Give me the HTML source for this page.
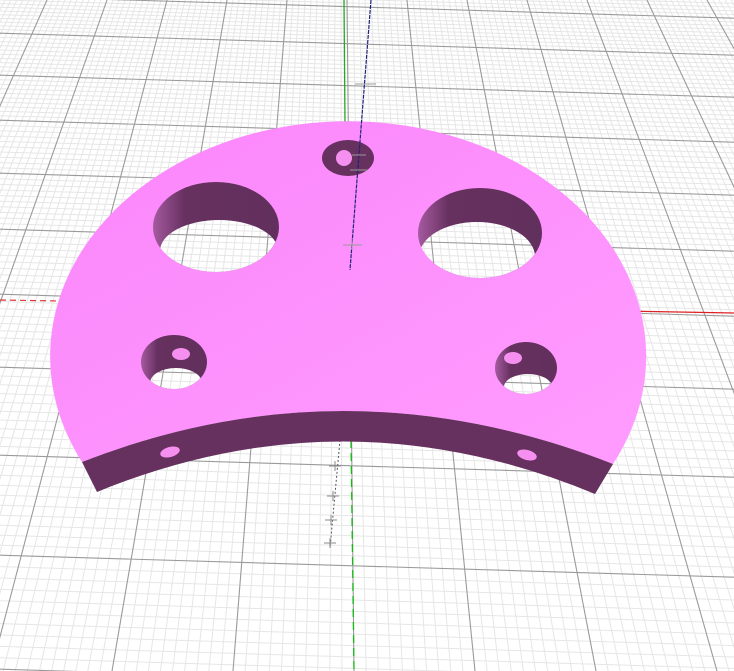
<!DOCTYPE html>
<html><head><meta charset="utf-8"><style>
html,body{margin:0;padding:0;background:#fff;overflow:hidden;width:734px;height:671px}
svg{display:block;position:absolute;left:0;top:0}
</style></head><body>
<svg id="s" width="734" height="671" viewBox="0 0 734 671" xmlns="http://www.w3.org/2000/svg">
<rect width="734" height="671" fill="#ffffff"/>
<g id="grid"></g>
<line x1="0" y1="300" x2="60" y2="301" stroke="#d33" stroke-width="1.2" stroke-dasharray="6,4"/>
<line x1="620" y1="311" x2="734" y2="313" stroke="#d22" stroke-width="1.3"/>
<line x1="344" y1="0" x2="345" y2="125" stroke="#2a2" stroke-width="1.3"/>
<line x1="351" y1="440" x2="354" y2="671" stroke="#1b1" stroke-width="1.3" stroke-dasharray="8,5"/>
<line x1="340" y1="440" x2="330" y2="548" stroke="#556" stroke-width="1" stroke-dasharray="2,2"/>
<g stroke="#888" stroke-width="1">
<line x1="329" y1="466" x2="341" y2="466"/><line x1="335" y1="461" x2="335" y2="471"/>
<line x1="327" y1="496" x2="339" y2="496"/><line x1="333" y1="491" x2="333" y2="501"/>
<line x1="325" y1="520" x2="337" y2="520"/><line x1="331" y1="515" x2="331" y2="525"/>
<line x1="324" y1="543" x2="336" y2="543"/><line x1="330" y1="538" x2="330" y2="548"/>
</g>
<defs>
<linearGradient id="pg" x1="0" y1="0" x2="1" y2="1">
<stop offset="0" stop-color="#fb86fb"/><stop offset="1" stop-color="#ff9cff"/>
</linearGradient>
<clipPath id="c1"><ellipse cx="216" cy="227" rx="63" ry="45"/></clipPath>
<clipPath id="c2"><ellipse cx="480" cy="233" rx="62" ry="45"/></clipPath>
<clipPath id="c3"><ellipse cx="174" cy="362" rx="33" ry="27"/></clipPath>
<clipPath id="c4"><ellipse cx="526" cy="368" rx="31" ry="26"/></clipPath>
<mask id="m" maskUnits="userSpaceOnUse" x="0" y="0" width="734" height="671">
<rect width="734" height="671" fill="#fff"/>
<ellipse cx="219" cy="251" rx="59" ry="31" fill="#000" clip-path="url(#c1)"/>
<ellipse cx="477" cy="257" rx="58" ry="35" fill="#000" clip-path="url(#c2)"/>
<ellipse cx="176" cy="383" rx="26" ry="15" fill="#000" clip-path="url(#c3)"/>
<ellipse cx="528" cy="387" rx="24" ry="13" fill="#000" clip-path="url(#c4)"/>
</mask>
<linearGradient id="hg" x1="0" y1="0" x2="1" y2="0">
<stop offset="0" stop-color="#a55aa0"/><stop offset="0.25" stop-color="#66305f"/><stop offset="1" stop-color="#62305d"/>
</linearGradient>
</defs>
<g mask="url(#m)">
<path d="M82,462 A298,235 0 1 1 613,464 Q345,359 82,462 Z" fill="url(#pg)"/>
<ellipse cx="216" cy="227" rx="63" ry="45" fill="url(#hg)"/>
<ellipse cx="480" cy="233" rx="62" ry="45" fill="url(#hg)"/>
<ellipse cx="174" cy="362" rx="33" ry="27" fill="url(#hg)"/>
<ellipse cx="526" cy="368" rx="31" ry="26" fill="url(#hg)"/>
<ellipse cx="348" cy="158" rx="26" ry="18" fill="#66305f"/>
</g>
<ellipse cx="181" cy="354" rx="9" ry="6" fill="#f590f0"/>
<ellipse cx="513" cy="358" rx="9" ry="6" fill="#f590f0"/>
<ellipse cx="344" cy="158" rx="8" ry="8" fill="#f590f0"/>
<path d="M82,462 Q345,359 613,464 L595,494 Q345,390 97,492 Z" fill="#66305f"/>
<ellipse cx="170" cy="452" rx="10" ry="5" transform="rotate(-15 170 452)" fill="#f590f0"/>
<ellipse cx="527" cy="455" rx="10" ry="5" transform="rotate(15 527 455)" fill="#f590f0"/>
<line x1="371" y1="0" x2="350" y2="270" stroke="#22227a" stroke-width="1.2" stroke-dasharray="4,1"/>
<g stroke="#999" stroke-width="1">
<line x1="355" y1="84" x2="376" y2="84"/>
<line x1="352" y1="155" x2="366" y2="155"/>
<line x1="350" y1="170" x2="368" y2="170"/>
<line x1="343" y1="245" x2="362" y2="245"/><line x1="352" y1="240" x2="352" y2="250"/>
</g>
</svg>
<script>
(function(){
var g=document.getElementById('grid'),h='';
function L(x1,y1,x2,y2,c,w){h+='<line x1="'+x1+'" y1="'+y1+'" x2="'+x2+'" y2="'+y2+'" stroke="'+c+'" stroke-width="'+w+'"/>';}
for(var k=-8;k<=8;k++){for(var j=1;j<10;j++){var t=k+j/10;var a=347+60*t,b=354+121*t;L(a,0,b,671,'#e6e6e6',1);}}
var maj=[-30,7,44,86,131,184,240,305,378,466,566,680,800];
var sl=0.03;
for(var i=0;i<maj.length-1;i++){for(var j=1;j<10;j++){var y=maj[i]+(maj[i+1]-maj[i])*j/10;L(0,y-360*sl,734,y+374*sl,'#e6e6e6',1);}}
for(var k=-8;k<=8;k++){var a=347+60*k,b=354+121*k;L(a,0,b,671,'#9a9a9a',1.1);}
for(var i=0;i<maj.length;i++){var y=maj[i];L(0,y-360*sl,734,y+374*sl,'#9a9a9a',1.1);}
g.innerHTML=h;
})();
</script>
</body></html>
